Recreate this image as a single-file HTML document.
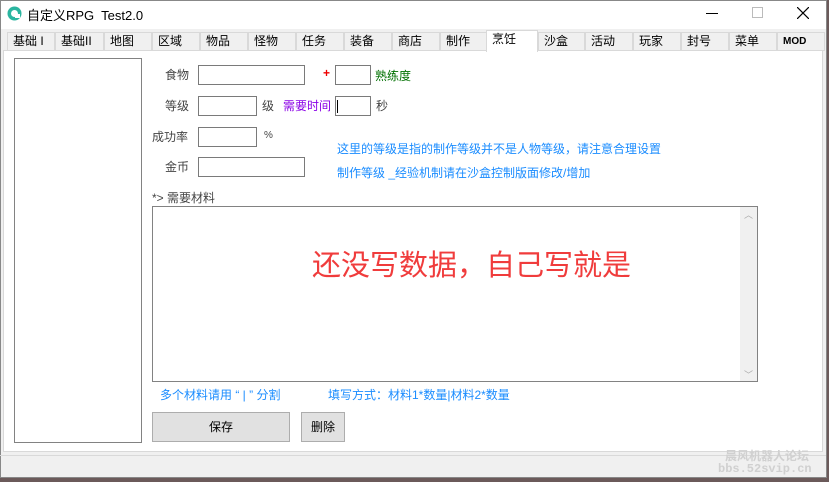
<!DOCTYPE html><html><head><meta charset="utf-8"><style>
*{margin:0;padding:0;box-sizing:border-box}
body{width:829px;height:482px;overflow:hidden;background:#6b5a5a;font-family:"Liberation Sans","Noto Sans CJK SC",sans-serif;font-size:12px;color:#333;position:relative}
.win{position:absolute;left:0;top:0;width:827px;height:478px;background:#f0f0f0;outline:1px solid #888;outline-offset:-1px}
.a{position:absolute}
.title{left:1px;top:1px;width:825px;height:28px;background:#fff}
.tab{position:absolute;top:32px;height:19px;border:1px solid #d9d9d9;background:#f0f0f0;font-size:12px;color:#000;padding-left:5px;line-height:17px}
.panel{left:3px;top:50px;width:820px;height:402px;background:#fff;border:1px solid #d9d9d9}
.inp{position:absolute;border:1px solid #7a7a7a;background:#fff;height:20px}
.lbl{position:absolute;font-size:12px;color:#444}
.blue{color:#1a8cff}
.btn{position:absolute;background:#e1e1e1;border:1px solid #adadad;text-align:center;font-size:12px;color:#000}
</style></head><body>
<div class="win">
<div class="a title"></div>
<svg class="a" style="left:7px;top:6px" width="15" height="15"><circle cx="7.5" cy="7.5" r="7" fill="#2bb5a0"/><circle cx="7.5" cy="7.5" r="3.5" fill="#fff"/><rect x="8" y="8" width="5" height="4" fill="#fff"/></svg>
<div class="a" style="left:27px;top:5px;font-size:13px;color:#000">自定义RPG&nbsp; Test2.0</div>
<div class="a" style="left:706px;top:13px;width:12px;height:1px;background:#000"></div>
<div class="a" style="left:752px;top:7px;width:11px;height:11px;border:1px solid #bbb"></div>
<svg class="a" style="left:797px;top:7px" width="12" height="12"><path d="M0 0L12 12M12 0L0 12" stroke="#000" stroke-width="1.2"/></svg>
<div class="tab" style="left:7px;width:48px">基础 I</div>
<div class="tab" style="left:55px;width:49px">基础II</div>
<div class="tab" style="left:104px;width:48px">地图</div>
<div class="tab" style="left:152px;width:48px">区域</div>
<div class="tab" style="left:200px;width:48px">物品</div>
<div class="tab" style="left:248px;width:48px">怪物</div>
<div class="tab" style="left:296px;width:48px">任务</div>
<div class="tab" style="left:344px;width:48px">装备</div>
<div class="tab" style="left:392px;width:48px">商店</div>
<div class="tab" style="left:440px;width:47px">制作</div>
<div class="tab" style="left:538px;width:47px">沙盒</div>
<div class="tab" style="left:585px;width:48px">活动</div>
<div class="tab" style="left:633px;width:48px">玩家</div>
<div class="tab" style="left:681px;width:48px">封号</div>
<div class="tab" style="left:729px;width:48px">菜单</div>
<div class="tab" style="left:777px;width:48px;font-size:10px;font-weight:bold">MOD</div>
<div class="a panel"></div>
<div class="tab" style="left:486px;top:30px;width:52px;height:22px;background:#fff;border-bottom:none">烹饪</div>
<div class="a" style="left:14px;top:58px;width:128px;height:385px;border:1px solid #828282;background:#fff"></div>
<div class="lbl" style="left:165px;top:66px">食物</div>
<div class="inp" style="left:198px;top:65px;width:107px"></div>
<div class="a" style="left:323px;top:66px;color:#e00;font-weight:bold">+</div>
<div class="inp" style="left:335px;top:65px;width:36px"></div>
<div class="lbl" style="left:375px;top:67px;color:#007000">熟练度</div>
<div class="lbl" style="left:165px;top:97px">等级</div>
<div class="inp" style="left:198px;top:96px;width:59px"></div>
<div class="lbl" style="left:262px;top:97px">级</div>
<div class="lbl" style="left:283px;top:97px;color:#8a00e6">需要时间</div>
<div class="inp" style="left:335px;top:96px;width:36px"><div style="position:absolute;left:1px;top:3px;width:1px;height:13px;background:#000"></div></div>
<div class="lbl" style="left:376px;top:97px">秒</div>
<div class="lbl" style="left:152px;top:128px">成功率</div>
<div class="inp" style="left:198px;top:127px;width:59px"></div>
<div class="lbl" style="left:264px;top:130px;font-size:10px">%</div>
<div class="lbl blue" style="left:337px;top:140px">这里的等级是指的制作等级并不是人物等级，请注意合理设置</div>
<div class="lbl" style="left:165px;top:158px">金币</div>
<div class="inp" style="left:198px;top:157px;width:107px"></div>
<div class="lbl blue" style="left:337px;top:164px">制作等级 _经验机制请在沙盒控制版面修改/增加</div>
<div class="lbl" style="left:152px;top:189px">*> 需要材料</div>
<div class="a" style="left:152px;top:206px;width:606px;height:176px;border:1px solid #828282;background:#fff"></div>
<div class="a" style="left:740px;top:207px;width:17px;height:174px;background:#f0f0f0"></div>
<div class="a" style="left:744px;top:208px;font-size:9px;color:#aaa">︿</div>
<div class="a" style="left:744px;top:368px;font-size:9px;color:#aaa">﹀</div>
<div class="a" style="left:312px;top:242px;font-size:29px;color:#f03c3c">还没写数据，自己写就是</div>
<div class="lbl blue" style="left:160px;top:386px">多个材料请用 “ | ” 分割</div>
<div class="lbl blue" style="left:328px;top:386px">填写方式：材料1*数量|材料2*数量</div>
<div class="btn" style="left:152px;top:412px;width:138px;height:30px;line-height:28px">保存</div>
<div class="btn" style="left:301px;top:412px;width:44px;height:30px;line-height:28px">删除</div>
<div class="a" style="left:0;top:455px;width:826px;height:1px;background:#d9d9d9"></div>
<div class="a" style="left:725px;top:447px;font-size:12px;color:#d0d0d0;font-weight:bold">晨风机器人论坛</div>
<div class="a" style="left:718px;top:462px;font-size:12px;color:#d0d0d0;font-family:'Liberation Mono',monospace;font-weight:bold">bbs.52svip.cn</div>
</div>
</body></html>
